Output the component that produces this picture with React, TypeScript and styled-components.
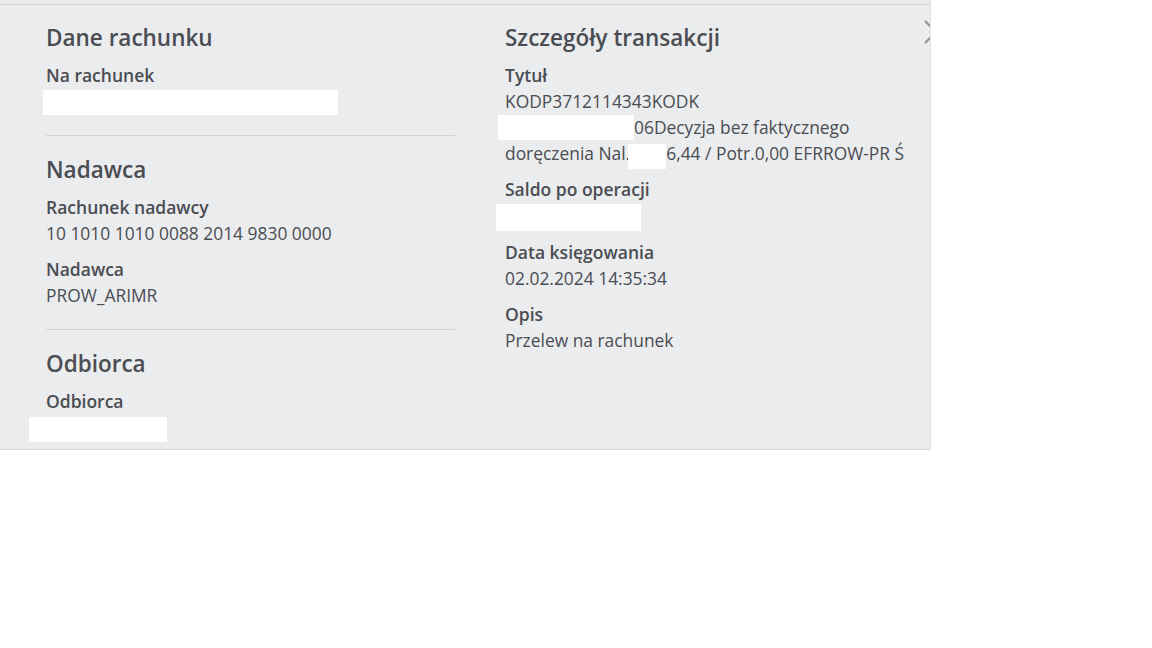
import React from "react";
import styled, { createGlobalStyle } from "styled-components";

const Global = createGlobalStyle`
  html, body { margin: 0; padding: 0; background: #ffffff; }
  body { font-family: "Open Sans", "Noto Sans", sans-serif; color: #4a4d52; }
`;

const Panel = styled.div`
  position: relative;
  width: 931px;
  box-sizing: border-box;
  background: #ebecee;
  padding-top: 4px;
  overflow: hidden;
  border-right: 1px solid #dfe0e2;
  border-bottom: 1px solid #d6d7da;
  box-shadow: 0 2px 0 #f1f1f2;
`;

const Body = styled.div`
  border-top: 1px solid #d6d7da;
  display: grid;
  grid-template-columns: 409px 409px;
  column-gap: 50px;
  padding: 0 17px 0 46px;
`;

const Column = styled.div`
  display: flex;
  flex-direction: column;
`;

const Section = styled.section`
  display: flex;
  flex-direction: column;
  gap: 10px;
  padding: 17px 0 21px;
  & + & {
    border-top: 1px solid #d3d4d7;
    padding-top: 18px;
  }
  &:last-child {
    padding-bottom: 9px;
  }
`;

const Heading = styled.h2`
  margin: 0 0 -2px;
  font-size: 22.5px;
  line-height: 32px;
  font-weight: 600;
  color: #4a4d52;
`;

const Field = styled.div`
  display: flex;
  flex-direction: column;
`;

const Label = styled.div`
  font-size: 17.5px;
  line-height: 26px;
  font-weight: 600;
  color: #4a4d52;
`;

const Value = styled.div`
  font-size: 17.4px;
  line-height: 26px;
  font-weight: 400;
  color: #4a4d52;
  min-height: 26px;
  white-space: nowrap;
`;

const Redact = styled.span<{ $w: number; $h: number; $top: number; $left: number }>`
  display: block;
  position: relative;
  top: ${(p) => p.$top}px;
  left: ${(p) => p.$left}px;
  width: ${(p) => p.$w}px;
  height: ${(p) => p.$h}px;
  background: #ffffff;
`;

const InlineRedact = styled.span<{ $w: number; $ml?: number; $top?: number }>`
  display: inline-block;
  position: relative;
  vertical-align: top;
  top: ${(p) => p.$top ?? 0}px;
  width: ${(p) => p.$w}px;
  height: 25px;
  margin-left: ${(p) => p.$ml ?? 0}px;
  background: #ffffff;
`;

const Close = styled.button`
  position: absolute;
  top: 20px;
  right: -18px;
  width: 24px;
  height: 24px;
  padding: 0;
  border: 0;
  background: transparent;
  color: #909296;
  display: flex;
  align-items: center;
  justify-content: center;
`;

export default function App() {
  return (
    <>
      <Global />
      <Panel>
        <Body>
          <Column>
            <Section>
              <Heading>Dane rachunku</Heading>
              <Field>
                <Label>Na rachunek</Label>
                <Value>
                  <Redact $w={295} $h={25} $top={2} $left={-3} />
                </Value>
              </Field>
            </Section>
            <Section>
              <Heading>Nadawca</Heading>
              <Field>
                <Label>Rachunek nadawcy</Label>
                <Value>10 1010 1010 0088 2014 9830 0000</Value>
              </Field>
              <Field>
                <Label>Nadawca</Label>
                <Value>PROW_ARIMR</Value>
              </Field>
            </Section>
            <Section>
              <Heading>Odbiorca</Heading>
              <Field>
                <Label>Odbiorca</Label>
                <Value>
                  <Redact $w={138} $h={25} $top={3} $left={-17} />
                </Value>
              </Field>
            </Section>
          </Column>
          <Column>
            <Section>
              <Heading>Szczegóły transakcji</Heading>
              <Field>
                <Label>Tytuł</Label>
                <Value>KODP3712114343KODK</Value>
                <Value>
                  <InlineRedact $w={136} $ml={-7} $top={1} />
                  06Decyzja bez faktycznego
                </Value>
                <Value>
                  doręczenia Nal.
                  <InlineRedact $w={38} $ml={-2} $top={4} />
                  6,44 / Potr.0,00 EFRROW-PR Ś
                </Value>
              </Field>
              <Field>
                <Label>Saldo po operacji</Label>
                <Value>
                  <Redact $w={145} $h={27} $top={2} $left={-9} />
                </Value>
              </Field>
              <Field>
                <Label>Data księgowania</Label>
                <Value>02.02.2024 14:35:34</Value>
              </Field>
              <Field>
                <Label>Opis</Label>
                <Value>Przelew na rachunek</Value>
              </Field>
            </Section>
          </Column>
        </Body>
        <Close aria-label="Zamknij">
          <svg width="24" height="24" viewBox="0 0 24 24" fill="none" stroke="currentColor" strokeWidth="2">
            <path d="M1 1 L23 23 M23 1 L1 23" />
          </svg>
        </Close>
      </Panel>
    </>
  );
}
